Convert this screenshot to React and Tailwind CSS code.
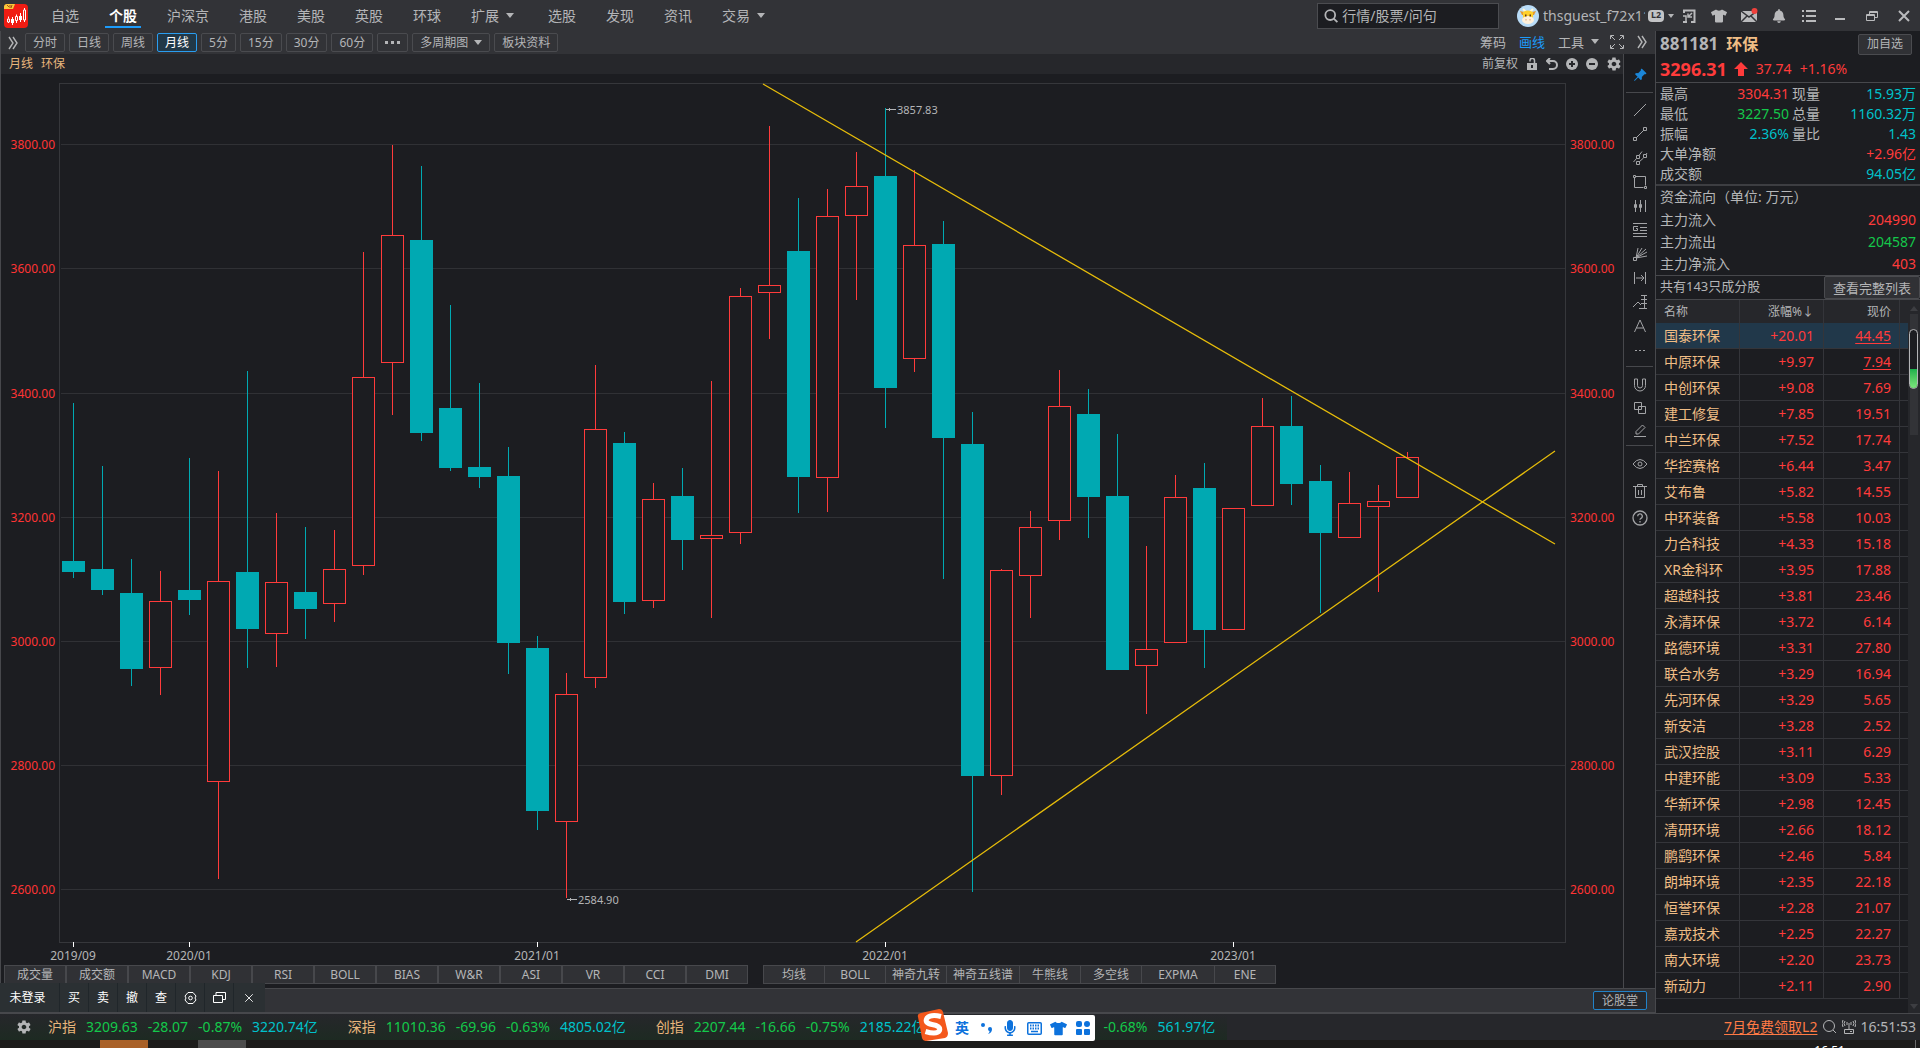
import React from "react";
import clsx from "clsx";
import { X } from "lucide-react";
import { FaTshirt, FaBell, FaMicrophone } from "react-icons/fa";
import { IoMdSettings } from "react-icons/io";
import { BsPinAngleFill } from "react-icons/bs";

const NAV = [
  { label: "自选" },
  { label: "个股", active: true },
  { label: "沪深京" },
  { label: "港股" },
  { label: "美股" },
  { label: "英股" },
  { label: "环球" },
  { label: "扩展", caret: true },
  { label: "选股" },
  { label: "发现" },
  { label: "资讯" },
  { label: "交易", caret: true },
];

const PERIODS = ["分时", "日线", "周线", "月线", "5分", "15分", "30分", "60分"];

// [up, high, body top, body bottom, low], one per month from 2019/09
const CANDLES = [
  [0, 403, 561, 572, 578],
  [0, 466, 569, 590, 595],
  [0, 559, 593, 669, 686],
  [1, 571, 601, 668, 695],
  [0, 458, 590, 600, 615],
  [1, 471, 581, 782, 879],
  [0, 371, 572, 629, 668],
  [1, 513, 582, 634, 667],
  [0, 527, 592, 609, 639],
  [1, 530, 569, 604, 622],
  [1, 252, 377, 566, 575],
  [1, 145, 235, 363, 415],
  [0, 166, 240, 433, 441],
  [0, 305, 408, 468, 471],
  [0, 383, 467, 477, 488],
  [0, 447, 476, 643, 674],
  [0, 636, 648, 811, 830],
  [1, 673, 694, 822, 898],
  [1, 365, 429, 678, 688],
  [0, 432, 443, 602, 614],
  [1, 483, 499, 601, 608],
  [0, 468, 496, 540, 570],
  [1, 381, 535, 539, 618],
  [1, 288, 296, 533, 544],
  [1, 126, 285, 293, 339],
  [0, 198, 251, 477, 513],
  [1, 189, 216, 478, 512],
  [1, 152, 186, 216, 300],
  [0, 108, 176, 388, 428],
  [1, 170, 245, 359, 372],
  [0, 221, 244, 438, 579],
  [0, 412, 444, 776, 892],
  [1, 569, 570, 776, 795],
  [1, 511, 527, 576, 618],
  [1, 370, 406, 521, 540],
  [0, 389, 414, 497, 538],
  [0, 434, 496, 670, 670],
  [1, 546, 649, 666, 714],
  [1, 475, 497, 643, 643],
  [0, 463, 488, 630, 668],
  [1, 508, 508, 630, 630],
  [1, 398, 426, 506, 506],
  [0, 396, 426, 484, 505],
  [0, 465, 481, 533, 613],
  [1, 472, 503, 538, 538],
  [1, 485, 501, 507, 592],
  [1, 452, 457, 498, 498],
];

const PRICE_LINES = [
  ["3800.00", 144],
  ["3600.00", 268],
  ["3400.00", 393],
  ["3200.00", 517],
  ["3000.00", 641],
  ["2800.00", 765],
  ["2600.00", 889],
];

const DATES = [
  ["2019/09", 73],
  ["2020/01", 189],
  ["2021/01", 537],
  ["2022/01", 885],
  ["2023/01", 1233],
];

const SUB_INDICATORS = ["成交量", "成交额", "MACD", "KDJ", "RSI", "BOLL", "BIAS", "W&R", "ASI", "VR", "CCI", "DMI"];
const MAIN_INDICATORS = ["均线", "BOLL", "神奇九转", "神奇五线谱", "牛熊线", "多空线", "EXPMA", "ENE"];

const STOCKS = [
  ["国泰环保", "+20.01", "44.45"],
  ["中原环保", "+9.97", "7.94"],
  ["中创环保", "+9.08", "7.69"],
  ["建工修复", "+7.85", "19.51"],
  ["中兰环保", "+7.52", "17.74"],
  ["华控赛格", "+6.44", "3.47"],
  ["艾布鲁", "+5.82", "14.55"],
  ["中环装备", "+5.58", "10.03"],
  ["力合科技", "+4.33", "15.18"],
  ["XR金科环", "+3.95", "17.88"],
  ["超越科技", "+3.81", "23.46"],
  ["永清环保", "+3.72", "6.14"],
  ["路德环境", "+3.31", "27.80"],
  ["联合水务", "+3.29", "16.94"],
  ["先河环保", "+3.29", "5.65"],
  ["新安洁", "+3.28", "2.52"],
  ["武汉控股", "+3.11", "6.29"],
  ["中建环能", "+3.09", "5.33"],
  ["华新环保", "+2.98", "12.45"],
  ["清研环境", "+2.66", "18.12"],
  ["鹏鹞环保", "+2.46", "5.84"],
  ["朗坤环境", "+2.35", "22.18"],
  ["恒誉环保", "+2.28", "21.07"],
  ["嘉戎技术", "+2.25", "22.27"],
  ["南大环境", "+2.20", "23.73"],
  ["新动力", "+2.11", "2.90"],
];

const INDEXES = [
  ["沪指", "3209.63", "-28.07", "-0.87%", "3220.74亿"],
  ["深指", "11010.36", "-69.96", "-0.63%", "4805.02亿"],
  ["创指", "2207.44", "-16.66", "-0.75%", "2185.22亿"],
];

const Caret = () => (
  <svg width="13" height="8" viewBox="0 0 13 8" className="shrink-0 fill-current">
    <path d="M1 1h8L5 6z" />
  </svg>
);

const Chevrons = () => (
  <svg width="10" height="14" viewBox="0 0 10 14" fill="none" stroke="currentColor" strokeWidth="1.4">
    <path d="M1 1l4 6-4 6M5 1l4 6-4 6" />
  </svg>
);

const Logo = () => (
  <svg width="24" height="24" viewBox="0 0 24 24">
    <rect width="24" height="24" rx="4" fill="#f01c13" />
    <path d="M3 0h8L9 5H0V3q0-3 3-3z" fill="#f8c83a" />
    <path d="M3 1l2 2M6 1v3M8 1l-1 3" stroke="#a34b12" />
    <g stroke="#fff" fill="none">
      <path d="M4.500 12.500v2M4.500 18v1M8.500 13v8M12.500 10.500v2M12.500 17v2M16.500 9v9M20.500 4v2M20.500 16v2" />
      <path d="M3.500 15h2v3h-2zM11.500 12.500h2v4h-2zM19.500 6h2v10h-2z" />
    </g>
    <path d="M7 15h3v4H7zM15 12h3v4h-3z" fill="#fff" />
  </svg>
);

const Avatar = () => (
  <svg width="22" height="22" viewBox="0 0 22 22">
    <circle cx="11" cy="11" r="11" fill="#b9dcf7" />
    <path d="M3 6l4 1h8l4-1-2 4H5z" fill="#e69a2e" />
    <path d="M6 4l3 3M16 4l-3 3" stroke="#fff6d8" strokeWidth="2" />
    <path d="M6 7q5-3 10 0v8H6z" fill="#ffd02c" />
    <ellipse cx="11" cy="15" rx="6" ry="4" fill="#fff0da" />
    <path d="M8 9.500h1.500v2H8zM12.500 9.500H14v2h-1.500z" fill="#5f3714" />
    <path d="M8.500 14h1v1.500h-1zM12.500 14h1v1.500h-1z" fill="#e0a070" />
  </svg>
);

const WINDOW_ICONS = [
  {
    name: "小窗",
    icon: (
      <svg width="14" height="14" viewBox="0 0 14 14" fill="none" stroke="currentColor" strokeWidth="2">
        <path d="M2 4V1.500h10.500V13H9M1 13h4" />
        <path d="M10 4L6 8M6 4.500V8h4M1 7h3v6" strokeWidth="1.500" />
      </svg>
    ),
  },
  { name: "换肤", icon: <FaTshirt size={16} /> },
  {
    name: "消息",
    icon: (
      <svg width="18" height="16" viewBox="0 0 18 16">
        <path d="M1 3h16v11H1z" fill="currentColor" />
        <path d="M1 3l8 6 8-6M1 14l6-6M17 14l-6-6" stroke="#323337" strokeWidth="1.500" fill="none" />
        <circle cx="14.500" cy="3" r="3" fill="#f0413c" />
      </svg>
    ),
  },
  { name: "提醒", icon: <FaBell size={14} /> },
  {
    name: "菜单",
    icon: (
      <svg width="14" height="12" viewBox="0 0 14 12" fill="currentColor">
        <path d="M0 0h2v2H0zM4 0h10v2H4zM0 5h2v2H0zM4 5h10v2H4zM0 10h2v2H0zM4 10h10v2H4z" />
      </svg>
    ),
  },
];

const FRAME_ICONS = [
  {
    name: "最小化",
    icon: (
      <svg width="10" height="12" viewBox="0 0 10 12" fill="currentColor">
        <path d="M0 8h10v2H0z" />
      </svg>
    ),
  },
  {
    name: "还原",
    icon: (
      <svg width="12" height="12" viewBox="0 0 12 12" fill="none" stroke="currentColor">
        <path d="M.5 4.500h8v6h-8zM.5 5.500h8M3.500 4V1.500h8v6H9M3.500 2.500h8" />
      </svg>
    ),
  },
  {
    name: "关闭",
    icon: (
      <svg width="12" height="12" viewBox="0 0 12 12" fill="none" stroke="currentColor" strokeWidth="2">
        <path d="M1 1l10 10M11 1L1 11" />
      </svg>
    ),
  },
];

const TitleBar = () => (
  <header className="flex h-[31px] shrink-0 items-center bg-[#323337] pl-1 text-sm text-[#b4b5b7]">
    <Logo />
    <nav className="ml-[23px] flex h-full items-center gap-[30px]">
      {NAV.map((item) => (
        <a
          key={item.label}
          href="#"
          className={clsx("relative flex h-full items-center gap-1.5", item.active && "font-bold text-white")}
        >
          {item.label}
          {item.caret && <Caret />}
          {item.active && <span className="absolute -inset-x-1 bottom-[3px] h-0.5 bg-[#1c9bfa]"></span>}
        </a>
      ))}
    </nav>
    <label className="ml-auto flex h-[26px] w-[182px] items-center gap-1 border border-[#4b4c50] bg-[#1c1d21] px-1.5">
      <svg width="16" height="16" viewBox="0 0 16 16" fill="none" stroke="currentColor" strokeWidth="2">
        <circle cx="7" cy="7" r="5.500" />
        <path d="M11 11l4 4" />
      </svg>
      <input
        aria-label="搜索"
        placeholder="行情/股票/问句"
        className="w-full min-w-0 bg-transparent text-sm outline-none placeholder:text-[#b4b5b7]"
      />
    </label>
    <div className="ml-[18px] flex items-center">
      <Avatar />
      <span className="ml-1 w-[102px] overflow-hidden whitespace-nowrap">thsguest_f72x11</span>
      <span className="ml-[3px] flex h-3 w-4 items-center justify-center rounded-sm bg-[#c3c4c6] text-[9px] font-bold text-[#323337]">
        L2
      </span>
      <svg width="6" height="4" viewBox="0 0 6 4" className="ml-1 fill-current">
        <path d="M0 0h6L3 4z" />
      </svg>
    </div>
    <div className="flex text-[#b9babc]">
      {WINDOW_ICONS.map((item) => (
        <button key={item.name} aria-label={item.name} className="flex h-6 w-[30px] items-center justify-center">
          {item.icon}
        </button>
      ))}
      {FRAME_ICONS.map((item) => (
        <button key={item.name} aria-label={item.name} className="flex h-6 w-8 items-center justify-center">
          {item.icon}
        </button>
      ))}
    </div>
  </header>
);

const periodButton = "flex h-[19px] items-center rounded-xs border px-[7px] whitespace-nowrap";

const PeriodBar = () => (
  <div className="flex h-[23px] shrink-0 items-center gap-1 border-l border-[#47484c] bg-[#323337] pl-[7px] text-xs text-[#b4b5b7]">
    <button aria-label="收起" className="mr-[3px]">
      <Chevrons />
    </button>
    {PERIODS.map((p) => (
      <button
        key={p}
        className={clsx(periodButton, p === "月线" ? "border-[#2a9df0] bg-[#213848] text-white" : "border-[#4a4b4f]")}
      >
        {p}
      </button>
    ))}
    <button aria-label="更多周期" className={clsx(periodButton, "border-[#4a4b4f]")}>
      <svg width="15" height="3" viewBox="0 0 15 3" fill="currentColor">
        <path d="M0 0h3v3H0zM6 0h3v3H6zM12 0h3v3h-3z" />
      </svg>
    </button>
    <button className={clsx(periodButton, "gap-[5px] border-[#4a4b4f] pr-[3px]")}>
      多周期图
      <Caret />
    </button>
    <button className={clsx(periodButton, "border-[#4a4b4f]")}>板块资料</button>
    <div className="ml-auto flex items-center gap-[13px] pr-2 text-[13px]">
      <button>筹码</button>
      <button className="text-[#1c9bfa]">画线</button>
      <button className="flex items-center gap-1.5">
        工具
        <Caret />
      </button>
      <button aria-label="全屏" className="-ml-1.5">
        <svg width="14" height="14" viewBox="0 0 14 14" fill="none" stroke="currentColor">
          <path d="M.5 4V.5H4M1 1l4 4M10 .5h3.500V4M13 1L9 5M.5 10v3.500H4M1 13l4-4M13.500 10v3.500H10M13 13L9 9" />
        </svg>
      </button>
      <button aria-label="展开">
        <Chevrons />
      </button>
    </div>
  </div>
);

const ChartHeader = () => (
  <div className="flex h-5 shrink-0 items-center gap-2 bg-[#26272b] pr-px pl-2 text-xs text-[#e9b67c]">
    <span>月线</span>
    <span>环保</span>
    <div className="ml-auto flex items-center gap-2 text-[#b4b5b7]">
      <button>前复权</button>
      <button aria-label="锁定">
        <svg width="12" height="12" viewBox="0 0 12 12">
          <path d="M1 5h10v7H1z" fill="currentColor" />
          <path d="M4 3.500V2.500a2 2 0 0 1 4.500 0V5" fill="none" stroke="currentColor" strokeWidth="1.500" />
          <path d="M5 7h2v3H5z" fill="#26272b" />
        </svg>
      </button>
      <button aria-label="撤销">
        <svg width="12" height="12" viewBox="0 0 12 12" fill="none" stroke="currentColor" strokeWidth="2">
          <path d="M4 0L1 3l3 3M1 3h6a4 4 0 0 1 0 8H3" />
        </svg>
      </button>
      <button aria-label="放大">
        <svg width="12" height="12" viewBox="0 0 12 12">
          <circle cx="6" cy="6" r="6" fill="currentColor" />
          <path d="M3 6h6M6 3v6" stroke="#26272b" strokeWidth="2" />
        </svg>
      </button>
      <button aria-label="缩小">
        <svg width="12" height="12" viewBox="0 0 12 12">
          <circle cx="6" cy="6" r="6" fill="currentColor" />
          <path d="M3 6h6" stroke="#26272b" strokeWidth="2" />
        </svg>
      </button>
      <button aria-label="设置">
        <IoMdSettings size={16} />
      </button>
    </div>
  </div>
);

const Candle = ({ index, candle }) => {
  const [up, high, top, bottom, low] = candle;
  const x = 73 + index * 29;
  const color = up ? "#ff3b3b" : "#00a9b2";
  return (
    <g fill={color}>
      <rect x={x} y={high} width="1" height={top - high} />
      <rect x={x} y={bottom} width="1" height={low - bottom} />
      {up ? (
        <rect x={x - 10.5} y={top + 0.5} width="22" height={bottom - top - 1} fill="#1c1d21" stroke={color} />
      ) : (
        <rect x={x - 11} y={top} width="23" height={bottom - top} />
      )}
    </g>
  );
};

const PeakLabel = ({ x, y, text }) => (
  <g>
    <path d={`M${x} ${y + 0.5}h10M${x + 3} ${y - 1}v3`} stroke="#b4b5b7" fill="none" shapeRendering="crispEdges" />
    <text x={x + 11} y={y + 5} fontSize="11" fill="#b4b5b7">
      {text}
    </text>
  </g>
);

const Chart = () => (
  <div className="min-h-0 flex-1">
    <svg viewBox="1 74 1622 891" className="h-full w-full" fontSize="12">
      <g shapeRendering="crispEdges">
        {PRICE_LINES.map(([label, y]) => (
          <rect key={label} x="61" y={y} width="1504" height="1" fill="#303135" />
        ))}
        <rect x="59.5" y="83.5" width="1506" height="859" fill="none" stroke="#36373b" />
        {CANDLES.map((candle, i) => (
          <Candle key={i} index={i} candle={candle} />
        ))}
        {DATES.map(([label, x]) => (
          <rect key={label} x={x} y="942" width="1" height="5" fill="#fff" />
        ))}
      </g>
      <path d="M763 84L1555 544M856 942L1555 451" stroke="#e6bc0a" strokeWidth="1.3" fill="none" />
      {PRICE_LINES.map(([label, y]) => (
        <g key={label} fill="#ff3434">
          <text x="55" y={y + 5} textAnchor="end">
            {label}
          </text>
          <text x="1570" y={y + 5}>
            {label}
          </text>
        </g>
      ))}
      {DATES.map(([label, x]) => (
        <text key={label} x={x} y="960" textAnchor="middle" fill="#b4b5b7">
          {label}
        </text>
      ))}
      <PeakLabel x={886} y={109} text="3857.83" />
      <PeakLabel x={567} y={899} text="2584.90" />
    </svg>
  </div>
);

const IndicatorTabs = () => (
  <div className="mb-1 flex h-[19px] shrink-0 pl-[3px] text-xs text-[#b4b5b7]">
    <div className="flex border border-[#47484c]">
      {SUB_INDICATORS.map((name) => (
        <button
          key={name}
          className="w-[62px] border-l-2 border-[#47484c] bg-[#303135] leading-[17px] first:w-[60px] first:border-l-0"
        >
          {name}
        </button>
      ))}
    </div>
    <div className="ml-[15px] flex border border-[#47484c]">
      {MAIN_INDICATORS.map((name) => (
        <button
          key={name}
          className={clsx(
            "border-l border-[#47484c] bg-[#303135] leading-[17px] whitespace-nowrap first:w-[60px] first:border-l-0",
            name.length === 5 ? "w-[73px]" : "w-[61px]"
          )}
        >
          {name}
        </button>
      ))}
    </div>
  </div>
);

const DRAW_TOOLS = [
  { name: "直线", d: "M1 13L13 1" },
  { name: "线段", d: "M3 11l8-8M.5 10.500h3v3h-3zM10.500 .5h3v3h-3z" },
  { name: "平行线", d: "M.5 11l3-3.500M6 4.500L9 .5M6 11l4.500-4M13 3.500L14 2M3.500 4.500h3v3h-3zM10.500 3.500h3v3h-3zM3.500 10.500h3v3h-3z" },
  { name: "矩形", d: "M1.500 3v9.500h9M3 1.500h9.500v9M.5 .5h2v2h-2zM11.500 11.500h2v2h-2z" },
  { name: "周期线", d: "M2.500 1v12M7.500 1v12M12.500 1v12M1.500 5.500h2v3h-2zM6.500 5.500h2v3h-2z" },
  { name: "黄金分割", d: "M0 .5h14M7 4.500h7M7 7.500h7M0 10.500h14M0 13.500h14M5 3.500H.5v4H4.500v-2H3" },
  { name: "扇形线", d: "M3 11L5 1M3 11L9 1M3 11l10-9M3 11l11-6M3 11l11-2M.5 10.500h3v3h-3z" },
  { name: "区间", d: "M1.500 1v12M12.500 1v12M3 7h8M8 4l3 3-3 3" },
  { name: "量度", d: "M0 12l5-5 3 3M8 .5h6M8 4.500h6M8 8.500h6M6 13.500h8M11.500 0v14" },
  { name: "文字", d: "M1.500 13L7 1l5.500 12M3.500 9h7" },
  { name: "更多", d: "M2 7.500h2M6 7.500h2M10 7.500h2" },
];

const EDIT_TOOLS = [
  { name: "磁吸", d: "M1.500 1v6.500a5.500 5.500 0 0 0 11 0V1h-3v6.500a2.500 2.500 0 0 1-5 0V1z" },
  { name: "复制", d: "M1.500 1.500h7v7h-7zM5.500 5.500h7v7h-7z" },
  { name: "编辑", d: "M3 10V7.500L9.500 1 12 3.500 5.500 10zM1 12.500h12" },
];

const ToolIcon = ({ tool, className }) => (
  <button aria-label={tool.name} className={clsx("flex w-full items-center justify-center", className)}>
    <svg width="14" height="14" viewBox="0 0 14 14" fill="none" stroke="currentColor" className="overflow-visible">
      <path d={tool.d} />
    </svg>
  </button>
);

const DrawToolbar = () => (
  <aside className="flex w-8 shrink-0 flex-col items-center border-l border-[#47484c] px-0.5 text-[#a3a4a7]">
    <button aria-label="固定" className="flex h-[38px] items-center pt-1 text-[#1b86d8]">
      <BsPinAngleFill size={14} />
    </button>
    <div className="w-full border-t border-[#47484c] pt-[5px] pb-1">
      {DRAW_TOOLS.map((tool) => (
        <ToolIcon key={tool.name} tool={tool} className="h-6" />
      ))}
    </div>
    <div className="w-full border-t border-[#47484c] pt-1.5 pb-[3px]">
      {EDIT_TOOLS.map((tool) => (
        <ToolIcon key={tool.name} tool={tool} className="h-[23px]" />
      ))}
    </div>
    <div className="flex w-full flex-col items-center border-t border-[#47484c] pt-[5px]">
      <button aria-label="显示" className="flex h-[26px] items-center">
        <svg width="16" height="12" viewBox="0 0 16 12" fill="none" stroke="currentColor">
          <path d="M1 6q7-9 14 0q-7 9-14 0z" />
          <circle cx="8" cy="6" r="2" />
        </svg>
      </button>
      <button aria-label="删除" className="flex h-[27px] items-center">
        <svg width="14" height="14" viewBox="0 0 14 14" fill="none" stroke="currentColor">
          <path d="M0 2.500h14M4.500 2V.5h5V2M2.500 3v10.500h9V3M5.500 6v5M8.500 6v5" />
        </svg>
      </button>
      <button aria-label="帮助" className="flex h-[27px] items-center">
        <svg width="16" height="16" viewBox="0 0 16 16" fill="none" stroke="currentColor" strokeWidth="1.300">
          <circle cx="8" cy="8" r="7" />
          <path d="M5.700 6.300a2.300 2.300 0 1 1 3.300 2q-1 .6-1 1.500M8 11v1.400" />
        </svg>
      </button>
    </div>
  </aside>
);

const LoginBar = () => (
  <div className="absolute bottom-px left-0 flex h-[29px] w-[265px] bg-[#2b3033] text-xs text-white">
    <button className="w-[60px] border-r border-[#20262a] pr-1">未登录</button>
    {["买", "卖", "撤", "查"].map((t) => (
      <button key={t} className="w-[29px] border-r border-[#20262a]">
        {t}
      </button>
    ))}
    <button aria-label="设置" className="flex w-[29px] items-center justify-center border-r border-[#20262a]">
      <svg width="13" height="14" viewBox="0 0 13 14" fill="none" stroke="currentColor">
        <path d="M4 1.500h5L12 5l-1 2 1 2-3 3.500H4L1 9l1-2-1-2z" />
        <circle cx="6.500" cy="7" r="1.800" />
      </svg>
    </button>
    <button aria-label="窗口" className="flex w-[29px] items-center justify-center border-r border-[#20262a]">
      <svg width="13" height="11" viewBox="0 0 13 11" fill="none" stroke="currentColor">
        <path d="M.5 3.500h9v7h-9zM3 3V.5h9.500v7H10" />
      </svg>
    </button>
    <button aria-label="关闭" className="flex w-[29px] items-center justify-center">
      <X size={14} strokeWidth={1.5} />
    </button>
  </div>
);

const Metric = ({ label, value, color }) => (
  <div className="flex justify-between">
    <dt>{label}</dt>
    <dd className={color}>{value}</dd>
  </div>
);

const RED = "text-[#ff3b3b]";
const GREEN = "text-[#14c84b]";
const CYAN = "text-[#00c2cb]";

const QuotePanel = () => (
  <aside className="flex w-[265px] shrink-0 flex-col border-l border-[#47484c] bg-[#1c1d21] text-sm leading-5 text-[#b4b5b7]">
    <div className="flex h-[26px] items-center pr-2 pl-1">
      <span className="text-[17px] font-bold">881181</span>
      <span className="ml-2 text-base font-bold text-[#f0bd85]">环保</span>
      <button className="ml-auto h-[21px] w-[54px] rounded-xs border border-[#4a4b4f] bg-[#303135] text-xs">加自选</button>
    </div>
    <div className={clsx("flex h-[26px] items-center border-b border-[#47484c] pb-0.5 pl-1", RED)}>
      <span className="text-lg font-bold">3296.31</span>
      <svg width="14" height="14" viewBox="0 0 14 14" className="ml-[7px] fill-current">
        <path d="M7 0l7 7h-4v7H4V7H0z" />
      </svg>
      <span className="ml-2">37.74</span>
      <span className="ml-2">+1.16%</span>
    </div>
    <div className="border-b-2 border-[#3d3e42] px-1 pt-px">
      <dl className="grid grid-cols-[129px_1fr] gap-x-[3px]">
        <Metric label="最高" value="3304.31" color={RED} />
        <Metric label="现量" value="15.93万" color={CYAN} />
        <Metric label="最低" value="3227.50" color={GREEN} />
        <Metric label="总量" value="1160.32万" color={CYAN} />
        <Metric label="振幅" value="2.36%" color={CYAN} />
        <Metric label="量比" value="1.43" color={CYAN} />
      </dl>
      <dl>
        <Metric label="大单净额" value="+2.96亿" color={RED} />
        <Metric label="成交额" value="94.05亿" color={CYAN} />
      </dl>
    </div>
    <div className="border-b border-[#47484c] px-1 leading-[22px]">
      <h2 className="h-[23px]">资金流向（单位: 万元）</h2>
      <dl>
        <Metric label="主力流入" value="204990" color={RED} />
        <Metric label="主力流出" value="204587" color={GREEN} />
        <Metric label="主力净流入" value="403" color={RED} />
      </dl>
    </div>
    <div className="flex h-6 items-center justify-between border-b border-[#47484c] pl-1 text-[13px]">
      <span className="pb-1">共有143只成分股</span>
      <button className="h-[23px] w-24 rounded-xs border border-[#4a4b4f] bg-[#303135]">查看完整列表</button>
    </div>
    <div className="flex min-h-0 flex-1 overflow-hidden">
      <div className="flex-1">
        <table className="w-full table-fixed border-separate border-spacing-0">
          <thead>
            <tr className="h-[23px] bg-[#26272b] text-xs">
              <th className="w-[84px] border-r border-[#34353a] pl-2 text-left font-normal">名称</th>
              <th className="w-[84px] border-r border-[#34353a] pr-[9px] text-right font-normal">涨幅%↓</th>
              <th className="w-[76px] border-r border-[#34353a] pr-2 text-right font-normal">现价</th>
              <th></th>
            </tr>
          </thead>
          <tbody>
            {STOCKS.map(([name, change, price], i) => (
              <tr key={name} className={clsx("h-[26px]", i === 0 && "bg-[#21384a]")}>
                <td className="border-r border-b border-[#34353a] pl-2 text-[#f0bd85]">{name}</td>
                <td className={clsx("border-r border-b border-[#34353a] pr-[9px] text-right", RED)}>{change}</td>
                <td className={clsx("border-r border-b border-[#34353a] pr-2 text-right", RED)}>
                  <span className={clsx(i < 2 && "underline underline-offset-2")}>{price}</span>
                </td>
                <td className="border-b border-[#34353a]"></td>
              </tr>
            ))}
          </tbody>
        </table>
      </div>
      <div className="relative flex w-3 flex-col items-center bg-[#26272b] pt-1.5 pb-1">
        <svg width="8" height="5" viewBox="0 0 8 5" fill="#3d3e42">
          <path d="M4 0l4 5H0z" />
        </svg>
        <div className="mt-[3px] h-[121px] w-2 bg-[#323337]"></div>
        <svg width="8" height="5" viewBox="0 0 8 5" fill="#3d3e42" className="mt-auto">
          <path d="M0 0h8L4 5z" />
        </svg>
        {/* floating level meter */}
        <div className="absolute top-[29px] left-px flex h-[60px] w-[9px] flex-col justify-end overflow-hidden rounded-full border border-[#b4b5b7] bg-[#1c1d21]">
          <div className="h-[19px] bg-linear-to-b from-[#17b04c] to-[#7ae67c]"></div>
        </div>
      </div>
    </div>
  </aside>
);

const ImeBar = () => (
  <div className="absolute top-px left-[925px] flex h-[26px] w-[170px] items-center rounded-xs bg-white pl-[30px] text-[#0d72dc]">
    <svg width="34" height="32" viewBox="0 0 34 32" className="absolute bottom-0 -left-2">
      <path d="M1 8Q0 5 4 4L22 0Q25 0 26 3L31 24Q31 28 28 29L9 32Q6 32 5 29z" fill="#f4581c" />
      <path
        d="M24 7.500Q14 5 10 9Q7 14 15 15.500Q24 17 22.500 21.500Q20 26 8.500 22.500"
        fill="none"
        stroke="#fff"
        strokeWidth="5"
      />
    </svg>
    <button className="w-[14px] text-sm font-bold">英</button>
    <button aria-label="中英文标点" className="ml-3">
      <svg width="12" height="14" viewBox="0 0 12 14" fill="currentColor">
        <circle cx="2" cy="4" r="2" />
        <path d="M7 8a2 2 0 1 1 4 0q0 4-4 5 2-2 1.500-3Q7 10 7 8z" />
      </svg>
    </button>
    <button aria-label="语音" className="ml-[9px]">
      <FaMicrophone size={16} />
    </button>
    <button aria-label="软键盘" className="ml-[9px]">
      <svg width="15" height="13" viewBox="0 0 15 13">
        <rect x=".75" y=".75" width="13.500" height="11.500" rx="1" fill="none" stroke="currentColor" strokeWidth="1.500" />
        <path d="M3 3.500h9.500M3 6.500h9.500" stroke="currentColor" strokeWidth="2" strokeDasharray="1.500 1" />
        <path d="M4 9.500h7" stroke="currentColor" strokeWidth="1.500" />
      </svg>
    </button>
    <button aria-label="皮肤" className="ml-2">
      <FaTshirt size={17} />
    </button>
    <button aria-label="工具箱" className="ml-[9px]">
      <svg width="14" height="14" viewBox="0 0 14 14" fill="currentColor">
        <rect width="6" height="6" rx="2" />
        <rect x="8" width="6" height="6" rx="3" />
        <rect y="8" width="6" height="6" rx="1" />
        <rect x="8" y="8" width="6" height="6" rx="1" />
      </svg>
    </button>
  </div>
);

const StatusBar = () => (
  <footer className="relative flex h-[27px] shrink-0 items-center border-t border-[#47484c] bg-[#26272b] pr-1 text-sm text-[#b4b5b7]">
    <div className="flex h-full items-center bg-linear-to-b from-[#26272b] to-[#1d2a22] pr-3 pl-4 whitespace-nowrap">
      <button aria-label="设置" className="mr-4">
        <IoMdSettings size={16} />
      </button>
      {INDEXES.map(([name, value, diff, pct, amount]) => (
        <a key={name} href="#" className="mr-[30px] flex gap-2.5">
          <span className="text-[#e9b67c]">{name}</span>
          <span className={GREEN}>{value}</span>
          <span className={GREEN}>{diff}</span>
          <span className={GREEN}>{pct}</span>
          <span className={CYAN}>{amount}</span>
        </a>
      ))}
      <a href="#" className="ml-[148px] flex gap-2.5">
        <span className={GREEN}>-0.68%</span>
        <span className={CYAN}>561.97亿</span>
      </a>
    </div>
    <a href="#" className="ml-auto text-[#ff7a45] underline underline-offset-2">
      7月免费领取L2
    </a>
    <button aria-label="查找" className="ml-1.5">
      <svg width="14" height="14" viewBox="0 0 14 14" fill="none" stroke="currentColor">
        <circle cx="6" cy="6" r="5.500" />
        <path d="M10 10l3 3" />
      </svg>
    </button>
    <svg width="14" height="14" viewBox="0 0 14 14" fill="none" stroke="currentColor" className="mr-1 ml-[5px]">
      <path d="M2.500 9.500h9v4h-9zM7 3v6M5 2v3M9 2v3M3 1L2 3.500 3 6M11 1l1 2.500L11 6M1 0L0 3.500 1 7M13 0l1 3.500L13 7M8 11.500h2" />
    </svg>
    <span>16:51:53</span>
    <ImeBar />
  </footer>
);

const TaskBar = () => (
  <div className="flex h-2 shrink-0 overflow-hidden bg-[#1d1c1b]">
    <div className="ml-[100px] w-12 bg-[#a96128]"></div>
    <div className="ml-[50px] w-12 bg-[#4c4c4c]"></div>
    <time className="mt-[3px] mr-[70px] ml-auto text-xs leading-4 text-white">16:51</time>
    <div className="mr-1 w-px bg-[#6a6a6a]"></div>
  </div>
);

const App = () => {
  return (
    <div className="flex h-screen flex-col overflow-hidden bg-[#1c1d21] font-['Noto_Sans','Noto_Sans_CJK_SC',sans-serif]">
      <TitleBar />
      <div className="flex min-h-0 flex-1">
        <main className="relative flex min-w-0 flex-1 flex-col">
          <PeriodBar />
          <div className="flex min-h-0 flex-1">
            <div className="flex min-w-0 flex-1 flex-col border-l border-[#47484c]">
              <ChartHeader />
              <Chart />
              <IndicatorTabs />
            </div>
            <DrawToolbar />
          </div>
          <div className="flex h-[25px] shrink-0 items-center justify-end border-y border-[#47484c] bg-[#323337] pr-2 text-xs text-[#b4b5b7]">
            <button className="h-[19px] w-[54px] rounded-xs border border-[#2282c8] bg-[#26272b]">论股堂</button>
          </div>
          <LoginBar />
        </main>
        <QuotePanel />
      </div>
      <StatusBar />
      <TaskBar />
    </div>
  );
};

export default App;
